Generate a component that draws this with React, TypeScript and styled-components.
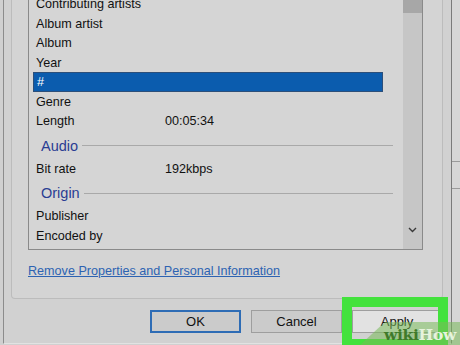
import React from "react";
import styled, { createGlobalStyle } from "styled-components";

const Global = createGlobalStyle`
  html, body { margin: 0; padding: 0; background: #cdcdcd; }
  body { font-family: "Liberation Sans", Arial, sans-serif; }
`;

const Page = styled.div`
  width: 460px;
  height: 345px;
  overflow: hidden;
  display: flex;
  position: relative;
  background: #d0d0d0;
`;

const Dialog = styled.div`
  margin-left: 3px;
  width: 447px;
  height: 343px;
  display: flex;
  flex-direction: column;
  background: #d1d1d1;
  border-left: 1px solid #8c8c8c;
  border-right: 1px solid #7a7a7a;
  border-bottom: 1px solid #e2e2e2;
`;

const TabPanel = styled.div`
  margin: 0 8px 0 7px;
  padding: 0 19px 19px 16px;
  display: flex;
  flex-direction: column;
  background: #d4d4d4;
  border: 1px solid #bcbcbc;
  border-top: none;
  border-radius: 0 0 4px 4px;
`;

const ListBox = styled.div`
  height: 249px;
  display: flex;
  border: 1px solid #8a8a8a;
  border-top: none;
  background: #d5d5d5;
  overflow: hidden;
`;

const Rows = styled.div`
  flex: 1;
  display: flex;
  flex-direction: column;
  margin-top: -5.75px;
`;

const Row = styled.div<{ $selected?: boolean }>`
  height: 19.5px;
  flex: none;
  margin: 0 20px 0 4px;
  padding-left: 3px;
  display: flex;
  align-items: center;
  font-size: 12.6px;
  color: ${(p) => (p.$selected ? "#ffffff" : "#111111")};
  background: ${(p) => (p.$selected ? "#0b5cae" : "transparent")};
  box-sizing: border-box;
  border: ${(p) => (p.$selected ? "1px solid #2c4f7a" : "none")};
`;

const Label = styled.span`
  width: 129px;
  flex: none;
  white-space: nowrap;
`;

const Value = styled.span`
  white-space: nowrap;
`;

const GroupHeader = styled.div`
  height: 28px;
  flex: none;
  margin: 0 10px 0 12px;
  padding-top: 2px;
  box-sizing: border-box;
  display: flex;
  align-items: center;
  gap: 4px;
  font-size: 14.5px;
  color: #2a3d93;
  &::after {
    content: "";
    flex: 1;
    height: 1px;
    background: #a9a9a9;
  }
`;

const Scrollbar = styled.div`
  width: 19px;
  flex: none;
  display: flex;
  flex-direction: column;
  background: #c6c6c6;
`;

const Thumb = styled.div`
  height: 13px;
  background: #a7a7a7;
`;

const Track = styled.div`
  flex: 1;
`;

const Arrow = styled.div`
  height: 22px;
  display: flex;
  align-items: flex-start;
  justify-content: center;
  padding-top: 3px;
`;

const Link = styled.a`
  margin-top: 13.5px;
  align-self: flex-start;
  font-size: 12.6px;
  line-height: 15px;
  color: #2d63b2;
  text-decoration: underline;
  cursor: pointer;
`;

const ButtonRow = styled.div`
  display: flex;
  justify-content: flex-end;
  gap: 10px;
  padding: 11px 9px 0 0;
`;

const Button = styled.button<{ $default?: boolean; $hot?: boolean }>`
  width: ${(p) => (p.$hot ? "90px" : "91px")};
  height: 23px;
  box-sizing: border-box;
  font-family: "Liberation Sans", Arial, sans-serif;
  font-size: 13px;
  color: #111;
  background: ${(p) => (p.$hot ? "#e2e2e2" : "#cbcbcb")};
  border: ${(p) => (p.$default ? "2px solid #2e6cb5" : "1px solid #9e9e9e")};
  padding: 0;
`;

const Highlight = styled.div`
  position: absolute;
  left: 342px;
  top: 297px;
  width: 106px;
  height: 52px;
  box-sizing: border-box;
  border: 10px solid #43e23d;
  pointer-events: none;
`;

const Watermark = styled.div`
  position: absolute;
  right: 0;
  bottom: 0;
  width: 100px;
  height: 23px;
  display: flex;
  align-items: center;
  justify-content: flex-end;
  padding: 2px 4px 0 0;
  box-sizing: border-box;
  background: rgba(120, 185, 90, 0.55);
  clip-path: polygon(25% 0, 100% 0, 100% 100%, 0 100%);
  font-family: "DejaVu Serif", "Liberation Serif", serif;
  font-weight: bold;
  font-size: 15.5px;
  letter-spacing: -0.3px;
  pointer-events: none;
`;

const Wiki = styled.span`
  color: #3f7a2a;
`;

const How = styled.span`
  color: #e6f3dc;
`;

const SideStrip = styled.div`
  flex: 1;
  background: linear-gradient(
    to bottom,
    #d6d6d6 0,
    #d6d6d6 161px,
    #9a9a9a 161px,
    #9a9a9a 162px,
    #d6d6d6 162px,
    #d6d6d6 188px,
    #9a9a9a 188px,
    #9a9a9a 189px,
    #d6d6d6 189px
  );
`;

type Item =
  | { kind: "row"; label: string; value?: string; selected?: boolean }
  | { kind: "group"; label: string };

const items: Item[] = [
  { kind: "row", label: "Contributing artists" },
  { kind: "row", label: "Album artist" },
  { kind: "row", label: "Album" },
  { kind: "row", label: "Year" },
  { kind: "row", label: "#", selected: true },
  { kind: "row", label: "Genre" },
  { kind: "row", label: "Length", value: "00:05:34" },
  { kind: "group", label: "Audio" },
  { kind: "row", label: "Bit rate", value: "192kbps" },
  { kind: "group", label: "Origin" },
  { kind: "row", label: "Publisher" },
  { kind: "row", label: "Encoded by" },
  { kind: "row", label: "Author URL" },
];

export default function App() {
  return (
    <>
      <Global />
      <Page>
        <Dialog>
          <TabPanel>
            <ListBox>
              <Rows>
                {items.map((it, i) =>
                  it.kind === "group" ? (
                    <GroupHeader key={i}>{it.label}</GroupHeader>
                  ) : (
                    <Row key={i} $selected={it.selected}>
                      <Label>{it.label}</Label>
                      {it.value && <Value>{it.value}</Value>}
                    </Row>
                  )
                )}
              </Rows>
              <Scrollbar>
                <Thumb />
                <Track />
                <Arrow>
                  <svg width="9" height="6" viewBox="0 0 9 6">
                    <path d="M1 1 L4.5 4.5 L8 1" fill="none" stroke="#3a3a3a" strokeWidth="1.4" />
                  </svg>
                </Arrow>
              </Scrollbar>
            </ListBox>
            <Link>Remove Properties and Personal Information</Link>
          </TabPanel>
          <ButtonRow>
            <Button $default>OK</Button>
            <Button>Cancel</Button>
            <Button $hot>Apply</Button>
          </ButtonRow>
        </Dialog>
        <SideStrip />
        <Highlight />
        <Watermark>
          <Wiki>wiki</Wiki>
          <How>How</How>
        </Watermark>
      </Page>
    </>
  );
}
